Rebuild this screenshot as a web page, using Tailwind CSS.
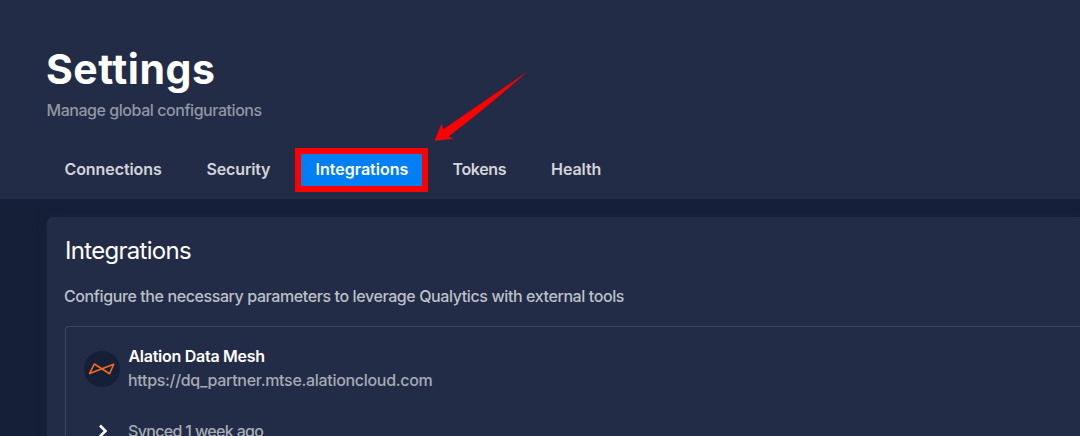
<!DOCTYPE html>
<html lang="en">
<head>
<meta charset="utf-8">
<title>Settings</title>
<script src="https://cdn.jsdelivr.net/npm/@tailwindcss/browser@4"></script>
</head>
<body class="relative h-[436px] overflow-hidden bg-[#161f38] font-['Inter',sans-serif] text-[16px] leading-6 whitespace-nowrap">
  <header class="h-[199px] bg-[#232c46] pt-[44px]">
    <h1 class="pl-[46px] text-[41px] leading-[50px] font-[650] tracking-[0.5px] text-white">Settings</h1>
    <p class="mt-1 pl-[46.5px] font-[450] tracking-[-0.45px] text-[#9296a3]">Manage global configurations</p>
    <nav class="mt-[26px] flex h-11 items-center pl-[64.5px] font-semibold text-[#d3d5da]">
      <a class="mb-0.5 w-[142px] tracking-[-0.08px]">Connections</a>
      <a class="mb-0.5 w-[88.5px] tracking-[-0.15px]">Security</a>
      <a class="h-11 w-[133px] border-6 border-[#ff0000] bg-[#007ff5] pt-[3px] pl-[14.5px] tracking-[0px] text-white">Integrations</a>
      <a class="mb-0.5 ml-[24.5px] w-[98.5px] tracking-[-0.35px]">Tokens</a>
      <a class="mb-0.5 tracking-[-0.05px]">Health</a>
    </nav>
  </header>
  <main class="mt-[18px] ml-[47px] h-[219px] overflow-hidden rounded-tl-md bg-[#232c46] pt-[18px] pl-[18px] shadow-[0_1px_10px_#1c2540]">
    <h2 class="text-[24px] leading-8 tracking-[-0.7px] text-white">Integrations</h2>
    <p class="mt-[17px] -ml-px font-[450] tracking-[-0.4px] text-[#bdc0c8]">Configure the necessary parameters to leverage Qualytics with external tools</p>
    <section class="mt-[18px] h-[111px] rounded-tl border-t border-l border-[#3c4560] pt-[17px] pl-[18px]">
      <div class="flex">
        <div class="mt-[7px] flex size-9 items-center justify-center rounded-full bg-[#161f38]">
          <svg class="size-9" viewBox="0 0 36 36" fill="none" stroke="#f56a20" stroke-width="1.6" stroke-linejoin="round"><path d="M10.3 13 25.6 22.7 29.7 13.2 5.6 22.4Z"/></svg>
        </div>
        <div class="ml-[9px]">
          <p class="-ml-[0.5px] font-semibold tracking-[-0.27px] text-white">Alation Data Mesh</p>
          <p class="-ml-px font-[450] tracking-[-0.31px] text-[#a7abb5]">https://dq_partner.mtse.alationcloud.com</p>
        </div>
      </div>
      <div class="mt-[27px] flex">
        <svg class="mt-[4px] ml-[13px] h-4 w-[12px]" viewBox="0 0 12 16" fill="none" stroke="#fff" stroke-width="2.6"><path d="M3 2.5 8.5 8 3 13.5"/></svg>
        <p class="ml-[19px] font-[450] tracking-[-0.66px] text-[#a7abb5]">Synced 1 week ago</p>
      </div>
    </section>
  </main>
  <svg class="absolute top-[68px] left-[430px] h-[78px] w-[102px]" viewBox="0 0 102 78" fill="#ff0000"><path d="M97.5 3.5Q56 40 18.500 68.500L23.700 70.800 4.500 72.700 11.500 56 13.300 61.300Z"/></svg>
</body>
</html>
